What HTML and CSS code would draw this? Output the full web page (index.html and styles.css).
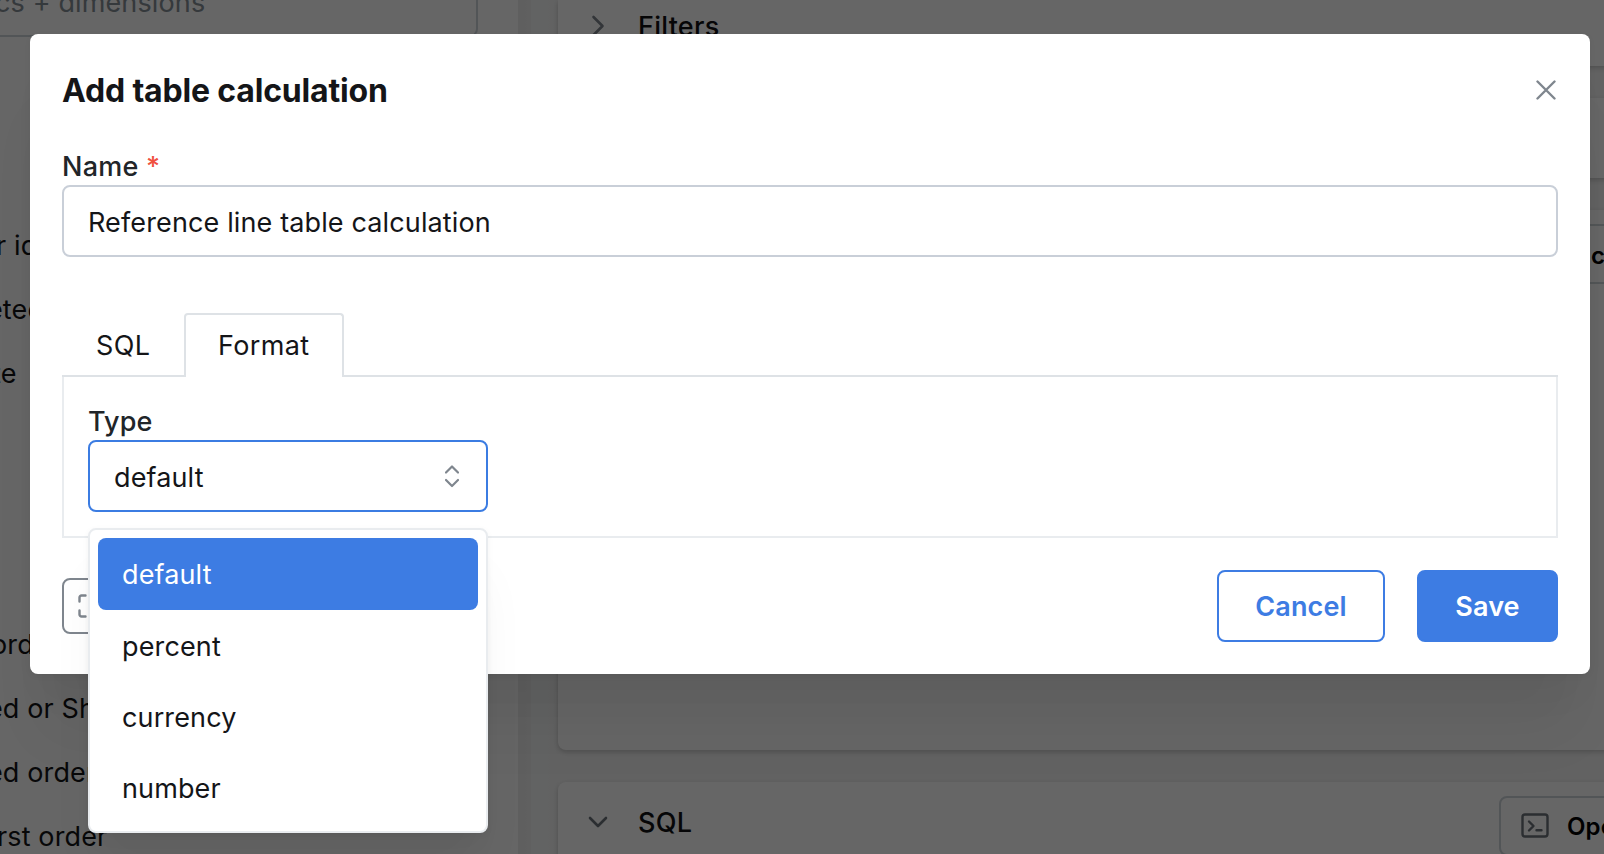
FILE: index.html
```html
<!DOCTYPE html>
<html lang="en">
<head>
<meta charset="utf-8">
<title>Add table calculation</title>
<link rel="stylesheet" href="styles.css">
</head>
<body>
<div class="app">
  <aside class="sidebar">
    <div class="search"><span class="search-text">cs + dimensions</span></div>
    <ul class="fields">
      <li class="field"><span class="f1">r id</span></li>
      <li class="field"><span class="f2">eted</span></li>
      <li class="field"><span class="f3">te</span></li>
    </ul>
    <ul class="fields metrics">
      <li class="field"><span class="f4">ord</span></li>
      <li class="field"><span class="f5">ed or Sh</span></li>
      <li class="field"><span class="f6">ed order</span></li>
      <li class="field"><span class="f7">rst order</span></li>
    </ul>
  </aside>
  <div class="gutter"></div>
  <main class="main">
    <section class="card card-filters">
      <svg class="chev" viewBox="0 0 24 24"><path d="M7.5 3l9 9-9 9"/></svg>
      <span class="card-title">Filters</span>
    </section>
    <section class="card card-chart"></section>
    <section class="card card-results"><div class="outline-btn config-btn">c</div></section>
    <section class="card card-sql">
      <svg class="chev" viewBox="0 0 24 24"><path d="M4 8l8 8 8-8"/></svg>
      <span class="card-title">SQL</span>
      <div class="outline-btn open-btn">
        <svg class="term" viewBox="0 0 28 26"><rect x="1.5" y="1.5" width="25" height="22" rx="2.5"/><path d="M8 8.5l4.5 4.5L8 17.500M15.500 17.200h5"/></svg>
        <span>Open</span>
      </div>
    </section>
  </main>
</div>
<div class="overlay">
  <div class="modal">
    <header class="modal-header">
      <h2 class="title">Add table calculation</h2>
      <svg class="close" viewBox="0 0 20 20"><path d="M1.500 1.500l17 17M18.500 1.500l-17 17"/></svg>
    </header>
    <label class="label name-label">Name <span class="req">*</span></label>
    <div class="input"><span>Reference line table calculation</span></div>
    <div class="tabs">
      <div class="tab">SQL</div>
      <div class="tab tab-active">Format</div>
      <div class="tab-rest"></div>
    </div>
    <div class="panel">
      <label class="label type-label">Type</label>
      <div class="select">
        <span>default</span>
        <svg class="updown" viewBox="0 0 14 24"><path d="M1 8.500l6-6 6 6M1 16l6 6 6-6"/></svg>
        <div class="dropdown">
          <div class="option option-on">default</div>
          <div class="option">percent</div>
          <div class="option">currency</div>
          <div class="option">number</div>
        </div>
      </div>
    </div>
    <footer class="footer">
      <div class="expand"><svg class="expand-icon" viewBox="0 0 24 24"><path d="M1.500 7.500v-4a2 2 0 0 1 2-2h4M16.500 1.500h4a2 2 0 0 1 2 2v4M22.500 16.500v4a2 2 0 0 1-2 2h-4M7.500 22.500h-4a2 2 0 0 1-2-2v-4"/></svg></div>
      <div class="btn btn-cancel">Cancel</div>
      <div class="btn btn-save">Save</div>
    </footer>
  </div>
</div>
</body>
</html>
```
FILE: styles.css
```css
* { box-sizing: border-box; }
body {
  margin: 0;
  width: 1604px;
  height: 854px;
  overflow: hidden;
  position: relative;
  font-family: Inter, "Liberation Sans", sans-serif;
  font-size: 27px;
  letter-spacing: .13px;
  color: #141518;
  background: #fff;
}
svg { fill: none; stroke: #7f868e; stroke-width: 2.4; stroke-linecap: round; stroke-linejoin: round; flex: none; }

/* Page behind the dialog */
.app { display: flex; width: 1604px; height: 854px; overflow: hidden; }
.sidebar { width: 518px; flex: none; overflow: hidden; }
.search {
  display: flex;
  align-items: flex-start;
  width: 478px;
  height: 37px;
  border: solid #ced4da;
  border-width: 0 2px 2px 0;
  border-bottom-right-radius: 8px;
  color: #868e96;
  line-height: 34px;
}
.search-text { margin-top: -14px; margin-left: -5px; white-space: nowrap; }
.fields { list-style: none; margin: 177px 0 0; padding: 0; }
.metrics { margin-top: 207px; }
.field { height: 64px; line-height: 64px; white-space: nowrap; }
.field span { display: block; }
.f1 { margin-left: -4px; }
.f2 { margin-left: -13px; }
.f3 { margin-left: -8px; }
.f4 { margin-left: -9px; }
.f5, .f6 { margin-left: -13px; }
.f7 { margin-left: -3px; }
.gutter { width: 40px; flex: none; background: linear-gradient(to right, #ededed 4px, #f0f0f0 13px, #f5f8f7 13px, #f5f7f7 30px, #f4f4f4); }
.main { width: 1100px; flex: none; background: #f5f5f5; display: flex; flex-direction: column; gap: 32px; }
.card {
  background: #fff;
  border-radius: 8px;
  box-shadow: 0 2px 6px rgba(0,0,0,.1), 0 2px 4px rgba(0,0,0,.1);
  flex: none;
  display: flex;
}
.card-filters { height: 66px; padding-left: 28px; border-radius: 0 0 8px 8px; }
.card-chart { height: 80px; }
.card-results { height: 540px; padding: 14px 0 0 960px; }
.card-sql { height: 120px; padding-left: 28px; }
.chev { width: 24px; height: 24px; margin: 14px 28px 0 0; stroke-width: 2.6; }
.card-sql .chev { margin-top: 28px; stroke: #6c737a; }
.card-title { font-weight: 500; line-height: 34px; margin-top: 10px; color: #101113; letter-spacing: .25px; }
.card-sql .card-title { margin-top: 24px; }
.outline-btn { border: 2px solid #ced4da; border-radius: 8px; height: 60px; display: flex; align-items: center; font-weight: 600; font-size: 24px; flex: none; color: #000; }
.config-btn { width: 200px; padding-left: 71px; padding-top: 2px; }
.open-btn { width: 200px; margin: 14px -41px 0 auto; padding-left: 20px; gap: 18px; }
.term { width: 28px; height: 26px; stroke: #6c737a; }

/* Dialog */
.overlay { position: absolute; inset: 0; background: rgba(0,0,0,.6); padding: 34px 14px 0 30px; }
.modal {
  height: 640px;
  background: #fff;
  border-radius: 8px;
  padding: 32px;
  display: flex;
  flex-direction: column;
  box-shadow: 0 2px 6px rgba(0,0,0,.05), 0 72px 56px -14px rgba(0,0,0,.05), 0 34px 34px -14px rgba(0,0,0,.04);
}
.modal-header { display: flex; justify-content: space-between; align-items: center; height: 48px; }
.title { margin: 0; font-size: 32px; line-height: 48px; padding-top: 2px; font-weight: 700; letter-spacing: -.17px; }
.close { width: 20px; height: 20px; margin-right: 2px; }
.label { font-weight: 500; line-height: 34px; color: #212529; display: block; }
.name-label { margin-top: 36px; height: 35px; letter-spacing: .25px; }
.req { color: #f0513f; }
.input, .select { height: 72px; border: 2px solid #c9cfd8; border-radius: 8px; padding: 0 24px; display: flex; align-items: center; flex: none; }
.input > span, .select > span { padding-top: 2px; }
.tabs { display: flex; margin-top: 56px; height: 64px; flex: none; letter-spacing: .35px; }
.tab { width: 122px; border-bottom: 2px solid #dee2e6; padding-left: 34px; line-height: 66px; }
.tab-active { width: 160px; border: 2px solid #dee2e6; border-bottom: 0; border-radius: 4px 4px 0 0; padding-left: 32px; line-height: 62px; }
.tab-rest { flex: 1; border-bottom: 2px solid #dee2e6; }
.panel { height: 161px; border: 2px solid #e9ecef; border-top: 0; padding: 28px 24px 0; flex: none; }
.type-label { height: 35px; }
.select { width: 400px; border-color: #3b7ce2; position: relative; justify-content: space-between; }
.updown { width: 14px; height: 24px; margin-right: 3px; stroke-width: 2.2; margin-top: -1px; }
.dropdown {
  position: absolute;
  left: -2px;
  top: 86px;
  width: 400px;
  height: 305px;
  padding: 8px;
  background: #fff;
  border: 2px solid #e9ecef;
  border-radius: 8px;
  box-shadow: 0 2px 6px rgba(0,0,0,.05), 0 40px 50px -10px rgba(0,0,0,.05), 0 20px 20px -10px rgba(0,0,0,.04);
}
.option { height: 71px; line-height: 74px; padding-left: 24px; border-radius: 8px; }
.option-on { height: 72px; background: #3d7ce3; color: #fff; }
.footer { display: flex; align-items: center; margin-top: 32px; gap: 32px; height: 72px; }
.expand { width: 56px; height: 56px; border: 2px solid #7f868e; border-radius: 8px; display: flex; align-items: center; justify-content: center; margin-right: auto; }
.expand-icon { width: 24px; height: 24px; }
.btn { height: 72px; border-radius: 8px; border: 2px solid #3d7ce3; font-weight: 600; display: flex; align-items: center; justify-content: center; }
.btn-cancel { width: 168px; color: #3d7ce3; }
.btn-save { width: 141px; background: #3d7ce3; color: #fff; }
```
